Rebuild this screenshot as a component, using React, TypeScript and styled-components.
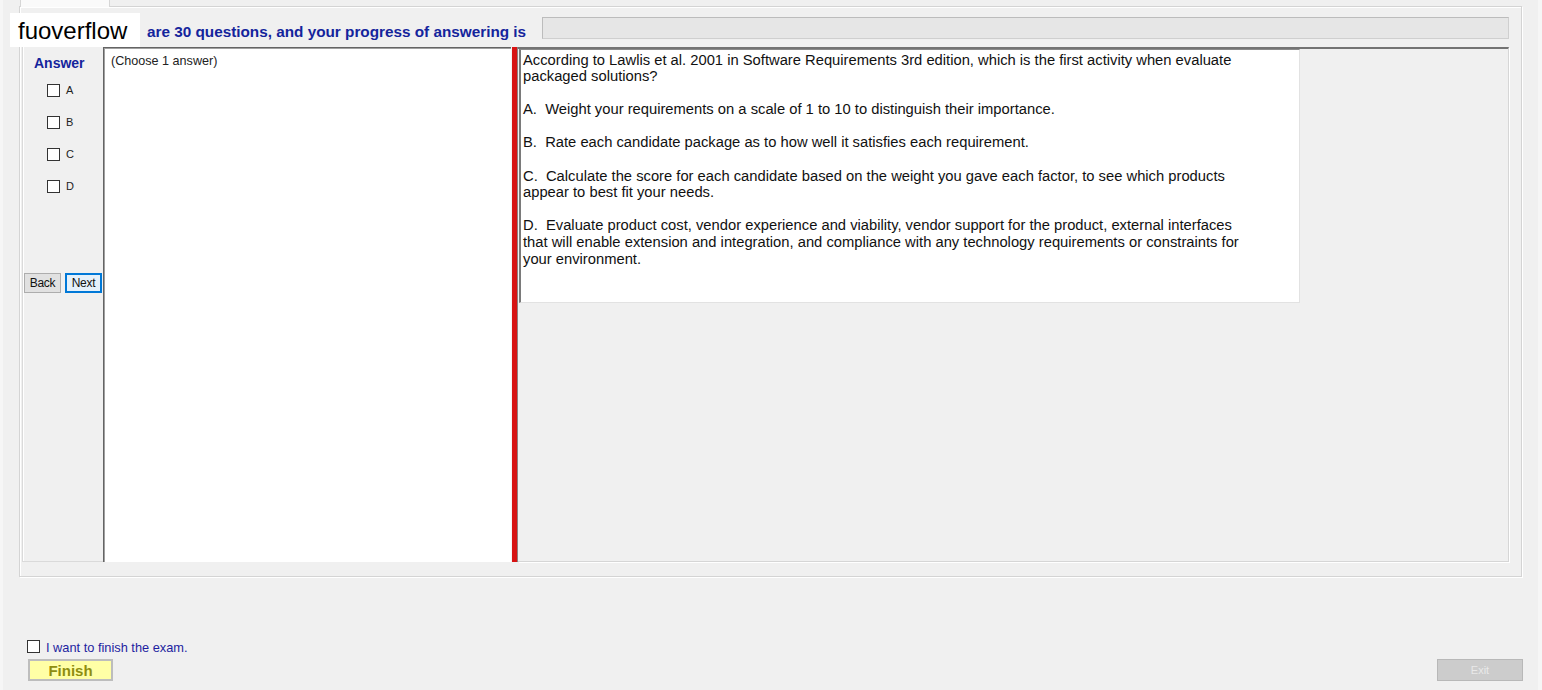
import React from "react";
import styled, { createGlobalStyle } from "styled-components";

const GlobalStyle = createGlobalStyle`
  html, body {
    margin: 0;
    padding: 0;
    background: #f6f6f6;
    font-family: "Liberation Sans", Arial, sans-serif;
  }
  * { box-sizing: border-box; }
`;

const Window = styled.div`
  position: relative;
  margin-left: 3px;
  width: 1535px;
  height: 690px;
  background: #f0f0f0;
  display: flex;
  flex-direction: column;
  overflow: hidden;
`;

const TabStrip = styled.div`
  height: 6px;
  display: flex;
  padding-left: 17px;
`;

const Tab = styled.div`
  width: 90px;
  height: 7px;
  background: #fafafa;
  border-left: 1px solid #d6d6d6;
  border-right: 1px solid #d6d6d6;
  position: relative;
  z-index: 1;
`;

const GroupBox = styled.div`
  margin-left: 16px;
  width: 1503px;
  height: 571px;
  border: 1px solid #d4d4d4;
  box-shadow: inset 1px 1px 0 #ffffff, 1px 1px 0 #ffffff;
  display: flex;
  flex-direction: column;
`;

const Header = styled.div`
  height: 40px;
  display: flex;
  align-items: flex-start;
  padding: 10px 12px 0 127px;
  gap: 16px;
`;

const ProgressLabel = styled.div`
  font-size: 15.3px;
  font-weight: bold;
  color: #14249c;
  line-height: 16px;
  padding-top: 7px;
  white-space: nowrap;
`;

const ProgressBar = styled.div`
  flex: 1;
  height: 22px;
  background: #e6e6e6;
  border: 1px solid #bcbcbc;
  border-right-color: #cfcfcf;
  border-bottom-color: #cfcfcf;
`;

const Content = styled.div`
  display: flex;
  margin: 0 12px 0 2px;
  height: 515px;
`;

const AnswerColumn = styled.div`
  width: 81px;
  display: flex;
  flex-direction: column;
  border-left: 1px solid #dadada;
  border-bottom: 1px solid #dadada;
  box-shadow: inset 1px 0 0 #ffffff;
`;

const AnswerTitle = styled.div`
  font-size: 14px;
  font-weight: bold;
  color: #14249c;
  line-height: 16px;
  margin: 8px 0 3px 11px;
`;

const OptionRow = styled.label`
  height: 32px;
  display: flex;
  align-items: center;
  padding-left: 24px;
  gap: 6px;
  font-size: 11px;
  color: #222;
`;

const Box = styled.span`
  width: 13px;
  height: 13px;
  border: 1px solid #333;
  background: #fff;
  display: inline-block;
  flex-shrink: 0;
`;

const NavRow = styled.div`
  display: flex;
  gap: 4px;
  margin-top: 71px;
  padding-left: 1px;
`;

const NavButton = styled.button<{ $focused?: boolean }>`
  height: 20px;
  width: 37px;
  padding: 0;
  font-family: "Liberation Sans", Arial, sans-serif;
  font-size: 12px;
  color: #111;
  letter-spacing: -0.3px;
  background: ${(p) => (p.$focused ? "#e5f1fb" : "#e1e1e1")};
  border: ${(p) => (p.$focused ? "2px solid #0078d7" : "1px solid #adadad")};
`;

const ChoicePanel = styled.div`
  width: 408px;
  background: #ffffff;
  border-top: 1px solid #646464;
  border-left: 1px solid #646464;
  box-shadow: inset 1px 1px 0 #a0a0a0;
  padding: 6px 0 0 7px;
  font-size: 12.6px;
  color: #222;
  line-height: 14px;
`;

const Splitter = styled.div`
  width: 7px;
  background: #d71313;
  border-left: 1px solid #f4f4f4;
  border-right: 1px solid #8f7f7f;
`;

const QuestionPanel = styled.div`
  flex: 1;
  background: #f0f0f0;
  border-top: 2px solid #737373;
  border-right: 1px solid #d6d6d6;
  border-bottom: 1px solid #d6d6d6;
  box-shadow: 1px 1px 0 #ffffff;
  padding-left: 1px;
`;

const QuestionBox = styled.div`
  width: 781px;
  height: 254px;
  background: #ffffff;
  border-top: 1px solid #8a8a8a;
  border-left: 2px solid #7a7a7a;
  border-right: 1px solid #e2e2e2;
  border-bottom: 1px solid #e2e2e2;
  padding: 1.5px 0 0 2px;
  font-size: 14.75px;
  line-height: 16.6px;
  color: #111;
`;

const Paragraph = styled.p`
  margin: 0 0 16.6px 0;
  width: 735px;
`;

const Footer = styled.div`
  flex: 1;
  display: flex;
  justify-content: space-between;
  align-items: flex-end;
  padding: 0 15px 9px 24px;
`;

const FinishGroup = styled.div`
  display: flex;
  flex-direction: column;
`;

const ConfirmRow = styled.label`
  display: flex;
  align-items: center;
  gap: 6px;
  height: 16px;
  margin-bottom: 5px;
  font-size: 12.8px;
  color: #1e1ea0;
`;

const ConfirmText = styled.span`
  padding-top: 3px;
`;

const FinishButton = styled.button`
  margin-left: 1px;
  width: 85px;
  height: 22px;
  padding: 0;
  background: #ffffa6;
  border: 2px solid #bdbdbd;
  font-family: "Liberation Sans", Arial, sans-serif;
  font-size: 15px;
  font-weight: bold;
  color: #8e8e10;
`;

const ExitButton = styled.button`
  width: 86px;
  height: 22px;
  padding: 0;
  background: #cccccc;
  border: 1px solid #b8b8b8;
  font-family: "Liberation Sans", Arial, sans-serif;
  font-size: 11px;
  color: #e9e9e9;
`;

const Watermark = styled.div`
  position: absolute;
  left: 7px;
  top: 13px;
  width: 130px;
  height: 34px;
  background: #ffffff;
  padding-left: 8px;
  font-family: "Liberation Sans", Arial, sans-serif;
  font-size: 24px;
  line-height: 36px;
  color: #000;
`;

const paragraphs = [
  "According to Lawlis et al. 2001 in Software Requirements 3rd edition, which is the first activity when evaluate packaged solutions?",
  "A.\u00a0 Weight your requirements on a scale of 1 to 10 to distinguish their importance.",
  "B.\u00a0 Rate each candidate package as to how well it satisfies each requirement.",
  "C.\u00a0 Calculate the score for each candidate based on the weight you gave each factor, to see which products appear to best fit your needs.",
  "D.\u00a0 Evaluate product cost, vendor experience and viability, vendor support for the product, external interfaces that will enable extension and integration, and compliance with any technology requirements or constraints for your environment.",
];

export default function App() {
  return (
    <>
      <GlobalStyle />
      <Window>
        <TabStrip>
          <Tab />
        </TabStrip>
        <GroupBox>
          <Header>
            <ProgressLabel>
              are 30 questions, and your progress of answering is
            </ProgressLabel>
            <ProgressBar />
          </Header>
          <Content>
            <AnswerColumn>
              <AnswerTitle>Answer</AnswerTitle>
              {["A", "B", "C", "D"].map((l) => (
                <OptionRow key={l}>
                  <Box />
                  {l}
                </OptionRow>
              ))}
              <NavRow>
                <NavButton>Back</NavButton>
                <NavButton $focused>Next</NavButton>
              </NavRow>
            </AnswerColumn>
            <ChoicePanel>(Choose 1 answer)</ChoicePanel>
            <Splitter />
            <QuestionPanel>
              <QuestionBox>
                {paragraphs.map((p, i) => (
                  <Paragraph key={i}>{p}</Paragraph>
                ))}
              </QuestionBox>
            </QuestionPanel>
          </Content>
        </GroupBox>
        <Footer>
          <FinishGroup>
            <ConfirmRow>
              <Box />
              <ConfirmText>I want to finish the exam.</ConfirmText>
            </ConfirmRow>
            <FinishButton>Finish</FinishButton>
          </FinishGroup>
          <ExitButton>Exit</ExitButton>
        </Footer>
        <Watermark>fuoverflow</Watermark>
      </Window>
    </>
  );
}
